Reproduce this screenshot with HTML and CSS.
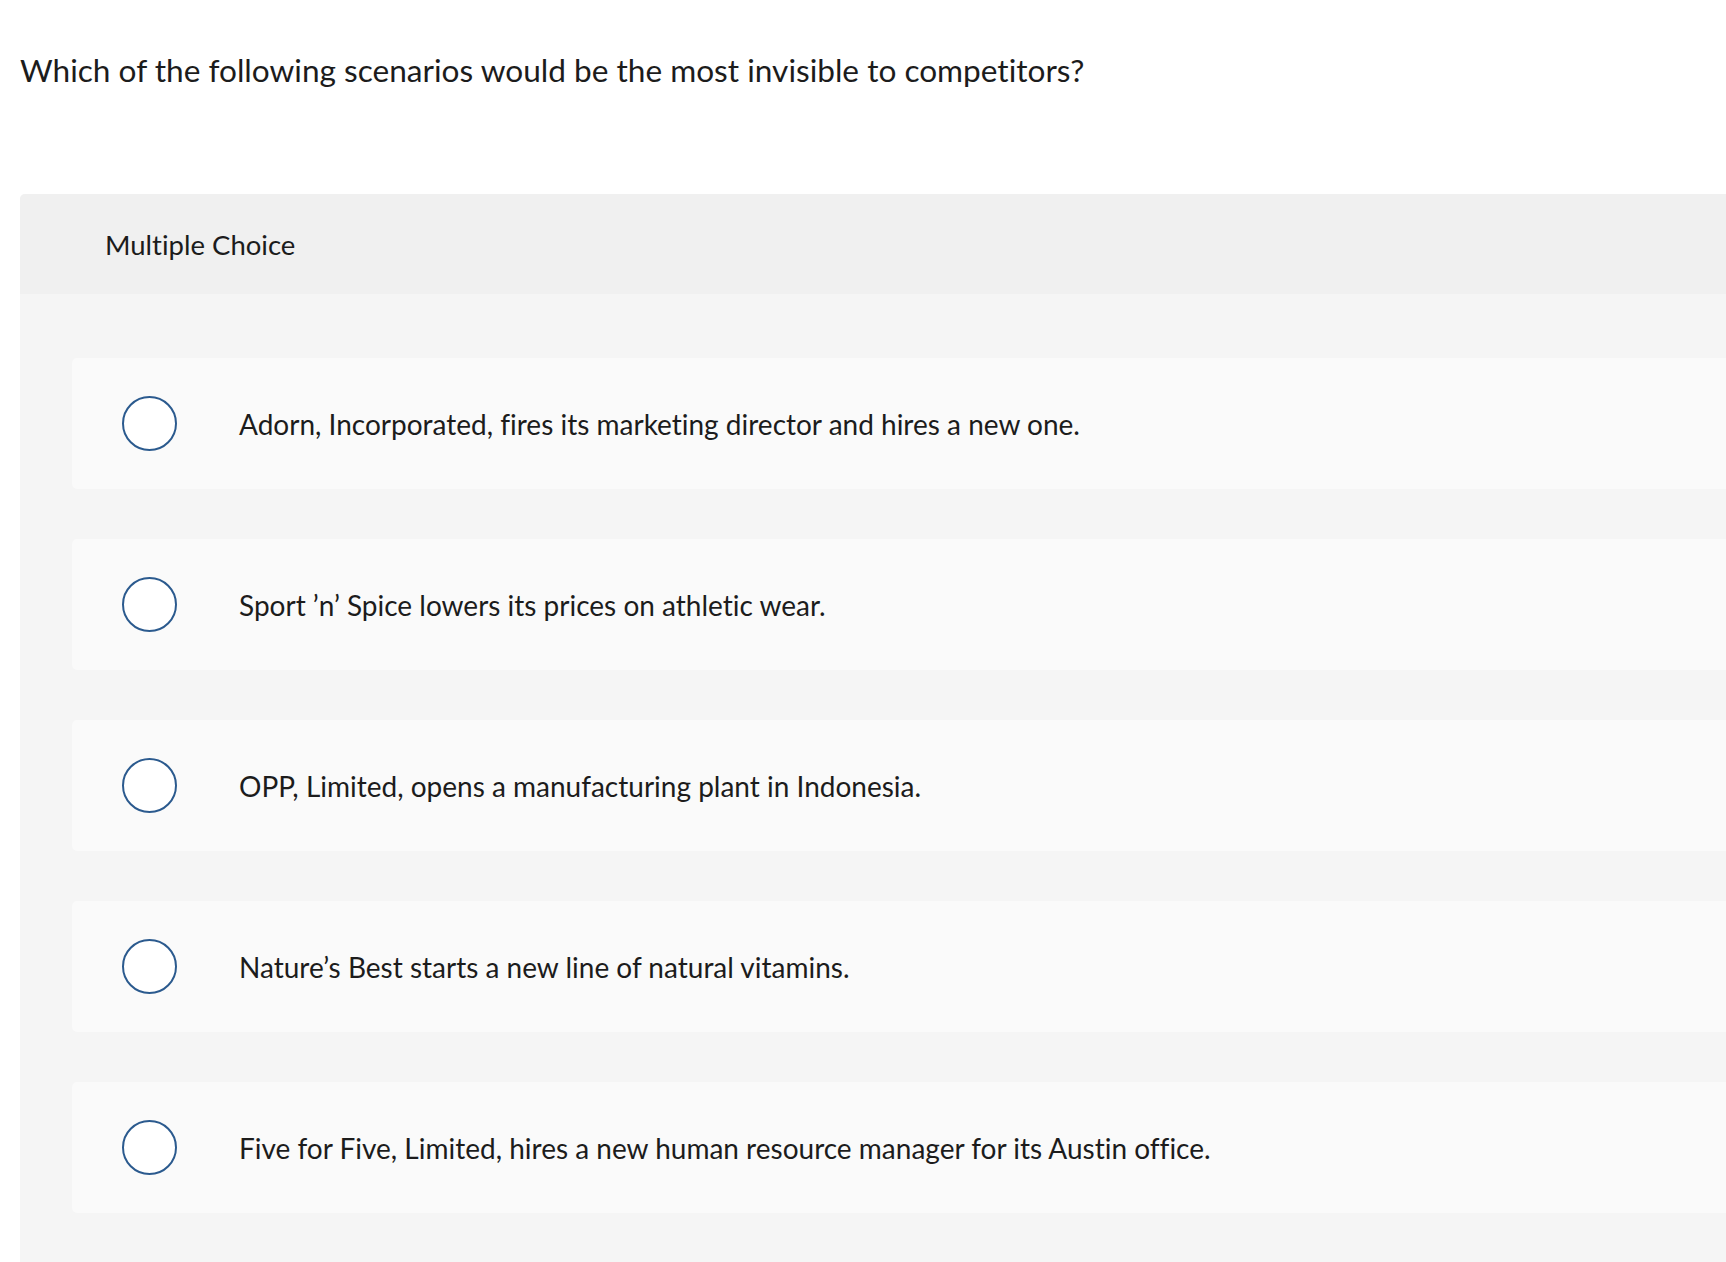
FILE: index.html
```html
<!DOCTYPE html>
<html>
<head>
<meta charset="utf-8">
<link rel="stylesheet" href="styles.css">
</head>
<body>
<div class="page">
  <p class="question">Which of the following scenarios would be the most invisible to competitors?</p>
  <div class="panel">
    <div class="panel-head">Multiple Choice</div>
    <div class="panel-body">
      <div class="option"><span class="radio"></span><span class="label">Adorn, Incorporated, fires its marketing director and hires a new one.</span></div>
      <div class="option"><span class="radio"></span><span class="label">Sport ’n’ Spice lowers its prices on athletic wear.</span></div>
      <div class="option"><span class="radio"></span><span class="label">OPP, Limited, opens a manufacturing plant in Indonesia.</span></div>
      <div class="option"><span class="radio"></span><span class="label">Nature’s Best starts a new line of natural vitamins.</span></div>
      <div class="option"><span class="radio"></span><span class="label">Five for Five, Limited, hires a new human resource manager for its Austin office.</span></div>
    </div>
  </div>
</div>
</body>
</html>
```
FILE: styles.css
```css
html, body {
  margin: 0;
  padding: 0;
  background: #ffffff;
}
.page {
  overflow: hidden;
  height: 1262px;
  font-family: "Lato", "Liberation Sans", sans-serif;
  font-variant-ligatures: none;
  color: #1c1c1c;
}
.question {
  margin: 0;
  padding: 50px 0 0 20px;
  font-size: 31.6px;
  line-height: 40px;
}
.panel {
  margin: 104px 0 0 20px;
  width: calc(100% + 40px);
  border-radius: 5px;
  background: #f5f5f5;
}
.panel-head {
  height: 100px;
  display: flex;
  align-items: center;
  padding-left: 85px;
  background: #f0f0f0;
  border-radius: 5px 5px 0 0;
  font-size: 27.5px;
}
.panel-body {
  padding: 64px 0 64px 52px;
  display: flex;
  flex-direction: column;
  gap: 50px;
}
.option {
  height: 131px;
  display: flex;
  align-items: center;
  padding-left: 50px;
  background: #fafafa;
  border-radius: 5px;
}
.radio {
  width: 51px;
  height: 51px;
  border: 2px solid #2b5a8e;
  border-radius: 50%;
  background: #ffffff;
  flex: none;
}
.label {
  margin-left: 62px;
  font-size: 28px;
}
```
